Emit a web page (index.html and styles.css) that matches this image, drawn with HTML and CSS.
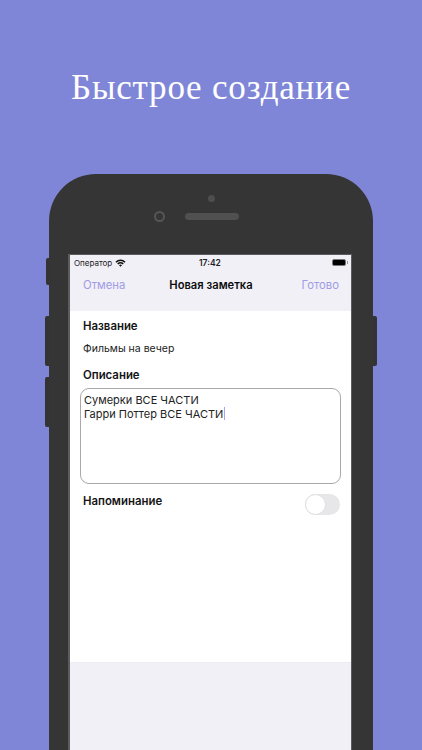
FILE: index.html
```html
<!DOCTYPE html>
<html lang="ru">
<head>
<meta charset="utf-8">
<title>Быстрое создание</title>
<link rel="stylesheet" href="styles.css">
</head>
<body>
<main class="page">
  <h1 class="headline">Быстрое создание</h1>
  <div class="phone">
    <span class="side side-mute"></span>
    <span class="side side-up"></span>
    <span class="side side-down"></span>
    <span class="side side-power"></span>
    <div class="bezel-top">
      <span class="sensor"></span>
      <div class="bezel-row">
        <span class="camera"></span>
        <span class="speaker"></span>
      </div>
    </div>
    <div class="screen">
      <div class="status">
        <div class="status-left">
          <span>Оператор</span>
          <svg class="wifi" viewBox="0 0 12 9" aria-hidden="true"><path d="M0.3 3A8 8 0 0 1 11.7 3L10.5 4.2A6.3 6.3 0 0 0 1.5 4.2Z"/><path d="M2.3 5A5.2 5.2 0 0 1 9.7 5L8.5 6.2A3.6 3.6 0 0 0 3.5 6.2Z"/><path d="M4.3 7A2.4 2.4 0 0 1 7.7 7L6 8.8Z"/></svg>
        </div>
        <span class="clock">17:42</span>
        <div class="battery"><span class="battery-body"></span><span class="battery-tip"></span></div>
      </div>
      <div class="navbar">
        <span class="nav-action">Отмена</span>
        <span class="nav-title">Новая заметка</span>
        <span class="nav-action">Готово</span>
      </div>
      <form class="form">
        <div class="label label-name">Название</div>
        <div class="value">Фильмы на вечер</div>
        <div class="label label-desc">Описание</div>
        <div class="textarea">Сумерки ВСЕ ЧАСТИ<br>Гарри Поттер ВСЕ ЧАСТИ<span class="caret"></span></div>
        <div class="reminder">
          <span class="label">Напоминание</span>
          <span class="toggle"><span class="knob"></span></span>
        </div>
      </form>
      <div class="footer-fill"></div>
    </div>
  </div>
</main>
</body>
</html>
```
FILE: styles.css
```css
html, body {
  margin: 0;
  padding: 0;
  height: 100%;
}
body {
  background: #8086d7;
  overflow: hidden;
}
.page {
  height: 750px;
  overflow: hidden;
  display: flex;
  flex-direction: column;
  align-items: center;
  background: #8086d7;
}
.headline {
  flex: none;
  margin: 0;
  height: 174px;
  padding-top: 66px;
  box-sizing: border-box;
  font: 400 35px/44px "Liberation Serif", serif;
  letter-spacing: 0.8px;
  color: #fff;
  white-space: nowrap;
}
.phone {
  position: relative;
  flex: none;
  width: 324px;
  height: 640px;
  background: #353535;
  border-radius: 47px 47px 0 0;
  padding: 0 19px 0 19px;
  box-sizing: border-box;
  font-family: "Inter", "Liberation Sans", sans-serif;
}
.side {
  position: absolute;
  width: 4px;
  background: #333;
}
.side-mute { left: -3px; top: 84px; height: 27px; border-radius: 2px 0 0 2px; }
.side-up { left: -4px; top: 142px; height: 50px; border-radius: 2px 0 0 2px; }
.side-down { left: -4px; top: 203px; height: 50px; border-radius: 2px 0 0 2px; }
.side-power { right: -4px; top: 142px; height: 50px; border-radius: 0 2px 2px 0; }
.bezel-top {
  height: 80px;
  display: flex;
  flex-direction: column;
  align-items: center;
  box-sizing: border-box;
  padding-top: 21px;
}
.sensor {
  width: 7px;
  height: 7px;
  border-radius: 50%;
  background: #4e4e4e;
}
.bezel-row {
  display: flex;
  align-items: center;
  gap: 20px;
  margin-top: 9px;
  margin-left: -29px;
}
.camera {
  width: 7px;
  height: 7px;
  border: 2px solid #565656;
  border-radius: 50%;
}
.speaker {
  width: 54px;
  height: 7px;
  border-radius: 4px;
  background: #505050;
}
.screen {
  width: 284px;
  height: 560px;
  box-sizing: border-box;
  border: solid #5c5c5c;
  border-width: 1px 1px 0 2px;
  background: #f1f0f7;
  display: flex;
  flex-direction: column;
}
.status {
  height: 15px;
  display: flex;
  align-items: center;
  justify-content: space-between;
  padding: 0 3px 0 4px;
  position: relative;
  font-size: 8px;
  color: #222;
}
.status-left {
  display: flex;
  align-items: center;
  gap: 3px;
}
.wifi {
  width: 11px;
  height: 8px;
  fill: #111;
}
.clock {
  position: absolute;
  left: 129px;
  font-size: 8.5px;
  font-weight: 600;
}
.battery {
  display: flex;
  align-items: center;
  gap: 1px;
}
.battery-body {
  width: 12px;
  height: 5px;
  background: #000;
  border: 1px solid #777;
  border-radius: 2px;
}
.battery-tip {
  width: 1px;
  height: 3px;
  background: #999;
}
.navbar {
  height: 41px;
  display: flex;
  align-items: center;
  justify-content: space-between;
  padding: 0 12px 12px 13px;
  box-sizing: border-box;
  font-size: 11.3px;
}
.nav-action {
  color: #a09be6;
}
.nav-title {
  font-weight: 600;
  color: #0c0c0c;
  font-size: 11.2px;
  margin-left: -5px;
}
.form {
  background: #fff;
  height: 351px;
  box-sizing: border-box;
  padding: 8px 10px 0 9px;
  display: flex;
  flex-direction: column;
  color: #141414;
}
.label {
  font-size: 11.4px;
  font-weight: 600;
  line-height: 15px;
  color: #141414;
}
.label-name { margin-left: 4px; }
.value {
  font-size: 10.5px;
  line-height: 14px;
  margin: 8px 0 0 4px;
  color: #222;
}
.label-desc {
  margin: 12px 0 0 4px;
}
.textarea {
  height: 96px;
  box-sizing: border-box;
  margin: 5px 0 0 1px;
  border: 1px solid #a9a9a9;
  border-radius: 9px;
  padding: 4px 3px;
  font-size: 11px;
  line-height: 14px;
  color: #222;
}
.caret {
  display: inline-block;
  width: 1px;
  height: 13px;
  margin-left: 1px;
  vertical-align: -2px;
  background: #a9a4ea;
}
.reminder {
  display: flex;
  align-items: flex-start;
  justify-content: space-between;
  margin: 10px 1px 0 4px;
}
.toggle {
  width: 35px;
  height: 21px;
  border-radius: 11px;
  background: #e7e7ea;
  position: relative;
  display: block;
}
.knob {
  position: absolute;
  left: 0;
  top: 0;
  width: 21px;
  height: 21px;
  box-sizing: border-box;
  border-radius: 50%;
  background: #fff;
  border: 1px solid #dedede;
}
.footer-fill {
  flex: 1;
  border-top: 1px solid #eceaf2;
}
```
